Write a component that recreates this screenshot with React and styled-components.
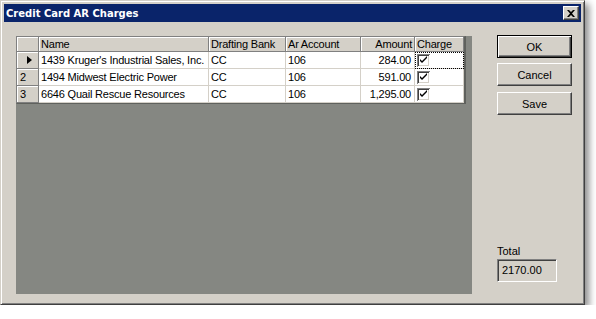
import React from "react";
import styled, { createGlobalStyle } from "styled-components";

const Global = createGlobalStyle`
  html, body { margin: 0; padding: 0; background: #ffffff; }
  body { font-family: "Liberation Sans", Arial, sans-serif; font-size: 11px; color: #000; }
  * { box-sizing: border-box; }
`;

const Window = styled.div`
  width: 585px;
  height: 305px;
  background: #d4d0c8;
  border: 1px solid;
  border-color: #d4d0c8 #404040 #404040 #d4d0c8;
  box-shadow: inset 1px 1px #ffffff, inset -1px -1px #808080, 4px 4px 7px rgba(0, 0, 0, 0.45);
  padding: 3px;
  display: flex;
  flex-direction: column;
`;

const TitleBar = styled.div`
  height: 18px;
  background: #0a246a;
  display: flex;
  align-items: center;
  justify-content: space-between;
  padding: 0 2px 0 2px;
`;

const Title = styled.span`
  font-family: "DejaVu Sans", Tahoma, sans-serif;
  font-weight: bold;
  font-size: 10px;
  color: #ffffff;
`;

const CloseBtn = styled.div`
  width: 16px;
  height: 14px;
  background: #d4d0c8;
  border: 1px solid;
  border-color: #ffffff #404040 #404040 #ffffff;
  box-shadow: inset -1px -1px #808080;
  display: flex;
  align-items: center;
  justify-content: center;
`;

const Body = styled.div`
  flex: 1;
  display: flex;
  padding: 13px 0 6px 12px;
  gap: 25px;
`;

const Panel = styled.div`
  margin-top: 1px;
  width: 456px;
  height: 258px;
  background: #858782;
`;

const Grid = styled.div`
  display: grid;
  grid-template-columns: 22px 170px 77px 75px 54px 49px;
  width: 450px;
  background: #ffffff;
  border: 1px solid;
  border-color: #808080 #5f615d #5f615d #808080;
  border-right-width: 3px;
`;

const HeadCell = styled.div`
  height: 15px;
  background: #d4d0c8;
  border-right: 1px solid #808080;
  border-bottom: 1px solid #808080;
  box-shadow: inset 1px 1px #ffffff;
  padding: 0 2px;
  line-height: 14px;
  letter-spacing: -0.2px;
  white-space: nowrap;
  overflow: hidden;
  text-align: ${(p) => (p.$right ? "right" : "left")};
`;

const RowHead = styled.div`
  height: 17px;
  background: #d4d0c8;
  border-right: 1px solid #808080;
  border-bottom: 1px solid #808080;
  box-shadow: inset 1px 1px #ffffff;
  display: flex;
  align-items: center;
  justify-content: ${(p) => (p.$arrow ? "center" : "flex-start")};
  padding: 0 0 0 ${(p) => (p.$arrow ? "4px" : "3px")};
  line-height: 16px;
`;

const Cell = styled.div`
  height: 17px;
  border-right: 1px solid #d4d0c8;
  border-bottom: 1px solid #d4d0c8;
  padding: 0 3px 0 2px;
  line-height: 16px;
  letter-spacing: -0.2px;
  white-space: nowrap;
  overflow: hidden;
  text-align: ${(p) => (p.$right ? "right" : "left")};
  display: ${(p) => (p.$check ? "flex" : "block")};
  align-items: center;
  outline: ${(p) => (p.$focus ? "1px dotted #000" : "none")};
  outline-offset: -1px;
`;

const Side = styled.div`
  width: 75px;
  display: flex;
  flex-direction: column;
  gap: 5px;
  padding-bottom: 13px;
`;

const Button = styled.div`
  height: 23px;
  background: #d4d0c8;
  border: 1px solid;
  border-color: ${(p) => (p.$default ? "#000" : "#ffffff #404040 #404040 #ffffff")};
  box-shadow: ${(p) =>
    p.$default
      ? "inset 1px 1px #ffffff, inset -1px -1px #404040, inset -2px -2px #808080"
      : "inset -1px -1px #808080"};
  display: flex;
  align-items: center;
  justify-content: center;
  font-family: "Liberation Sans", Tahoma, sans-serif;
  font-size: 11px;
  margin-top: ${(p) => p.$gapTop || "0"};
`;

const TotalGroup = styled.div`
  margin-top: auto;
  display: flex;
  flex-direction: column;
  gap: 1px;
`;

const Label = styled.div`
  font-size: 11px;
  line-height: 14px;
`;

const TotalBox = styled.div`
  width: 60px;
  height: 23px;
  border: 1px solid;
  border-color: #808080 #ffffff #ffffff #808080;
  box-shadow: inset 1px 1px #404040;
  background: #d4d0c8;
  padding: 0 4px;
  line-height: 21px;
  font-size: 11px;
`;

const Arrow = () => (
  <svg width="5" height="8" viewBox="0 0 5 8">
    <polygon points="0,0 5,4 0,8" fill="#000" />
  </svg>
);

const Check = () => (
  <svg width="13" height="13" viewBox="0 0 13 13">
    <rect x="0" y="0" width="13" height="13" fill="#808080" />
    <rect x="1" y="1" width="12" height="12" fill="#ffffff" />
    <rect x="1" y="1" width="11" height="11" fill="#404040" />
    <rect x="2" y="2" width="10" height="10" fill="#d4d0c8" />
    <rect x="2" y="2" width="9" height="9" fill="#ffffff" />
    <path d="M3 5 L5 7 L10 2 L10 4 L5 9 L3 7 Z" fill="#000" />
  </svg>
);

const CloseX = () => (
  <svg width="8" height="7" viewBox="0 0 8 7">
    <path d="M0 0 L2 0 L4 2 L6 0 L8 0 L5 3.5 L8 7 L6 7 L4 5 L2 7 L0 7 L3 3.5 Z" fill="#000" />
  </svg>
);

const rows = [
  { name: "1439 Kruger's Industrial Sales, Inc.", bank: "CC", acct: "106", amt: "284.00" },
  { name: "1494 Midwest Electric Power", bank: "CC", acct: "106", amt: "591.00" },
  { name: "6646 Quail Rescue Resources", bank: "CC", acct: "106", amt: "1,295.00" },
];

export default function App() {
  return (
    <>
      <Global />
      <Window>
        <TitleBar>
          <Title>Credit Card AR Charges</Title>
          <CloseBtn>
            <CloseX />
          </CloseBtn>
        </TitleBar>
        <Body>
          <Panel>
            <Grid>
              <HeadCell />
              <HeadCell>Name</HeadCell>
              <HeadCell>Drafting Bank</HeadCell>
              <HeadCell>Ar Account</HeadCell>
              <HeadCell $right>Amount</HeadCell>
              <HeadCell>Charge</HeadCell>
              {rows.map((r, i) => (
                <React.Fragment key={i}>
                  <RowHead $arrow={i === 0}>{i === 0 ? <Arrow /> : i + 1}</RowHead>
                  <Cell>{r.name}</Cell>
                  <Cell>{r.bank}</Cell>
                  <Cell>{r.acct}</Cell>
                  <Cell $right>{r.amt}</Cell>
                  <Cell $check $focus={i === 0}>
                    <Check />
                  </Cell>
                </React.Fragment>
              ))}
            </Grid>
          </Panel>
          <Side>
            <Button $default>OK</Button>
            <Button>Cancel</Button>
            <Button $gapTop="1px">Save</Button>
            <TotalGroup>
              <Label>Total</Label>
              <TotalBox>2170.00</TotalBox>
            </TotalGroup>
          </Side>
        </Body>
      </Window>
    </>
  );
}
